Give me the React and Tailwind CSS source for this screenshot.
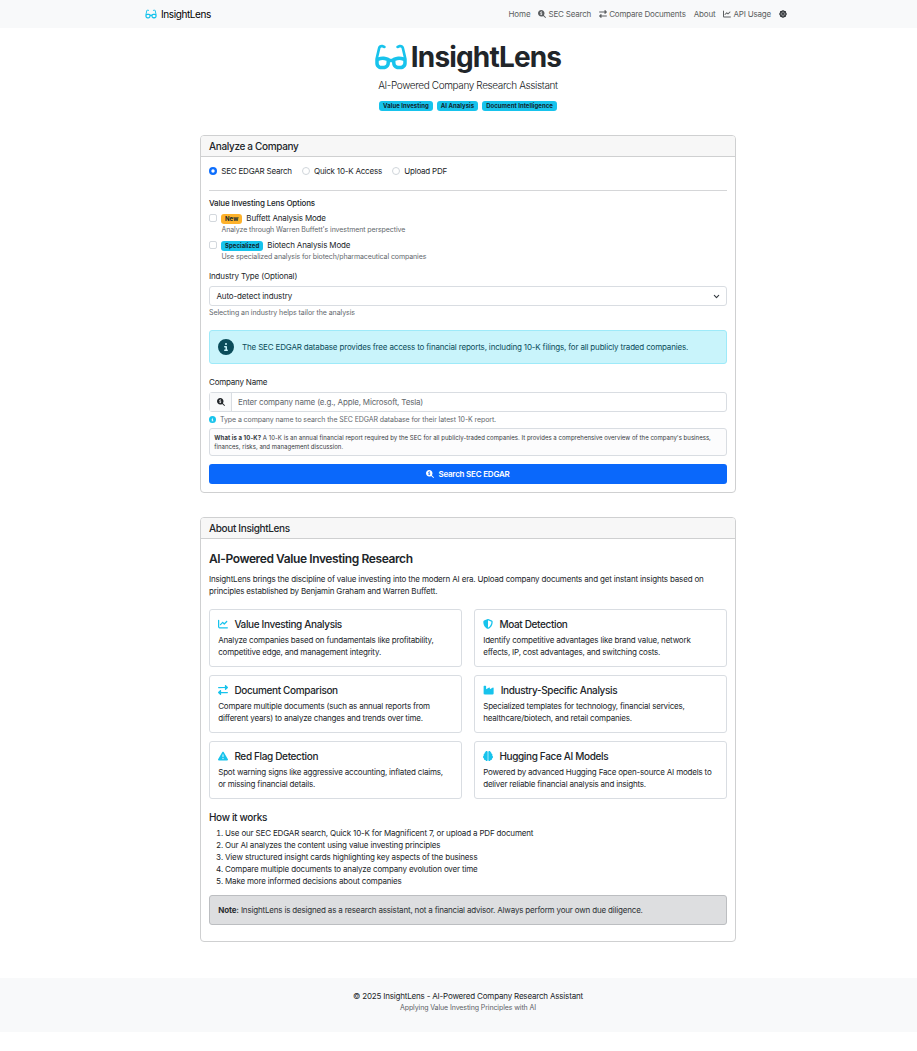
import React from "react";
import {
  FaGlasses, FaMagnifyingGlassDollar, FaRightLeft, FaChartLine, FaCircleInfo,
  FaShieldHalved, FaIndustry, FaTriangleExclamation, FaBrain, FaDharmachakra,
} from "react-icons/fa6";

const cards = [
  { icon: <FaChartLine />, title: "Value Investing Analysis", lines: ["Analyze companies based on fundamentals like profitability,", "competitive edge, and management integrity."] },
  { icon: <FaShieldHalved />, title: "Moat Detection", lines: ["Identify competitive advantages like brand value, network", "effects, IP, cost advantages, and switching costs."] },
  { icon: <FaRightLeft />, title: "Document Comparison", lines: ["Compare multiple documents (such as annual reports from", "different years) to analyze changes and trends over time."] },
  { icon: <FaIndustry className="w-[11.25px]" />, title: "Industry-Specific Analysis", lines: ["Specialized templates for technology, financial services,", "healthcare/biotech, and retail companies."] },
  { icon: <FaTriangleExclamation />, title: "Red Flag Detection", lines: ["Spot warning signs like aggressive accounting, inflated claims,", "or missing financial details."] },
  { icon: <FaBrain />, title: "Hugging Face AI Models", lines: ["Powered by advanced Hugging Face open-source AI models to", "deliver reliable financial analysis and insights."] },
];

const steps = [
  "Use our SEC EDGAR search, Quick 10-K for Magnificent 7, or upload a PDF document",
  "Our AI analyzes the content using value investing principles",
  "View structured insight cards highlighting key aspects of the business",
  "Compare multiple documents to analyze company evolution over time",
  "Make more informed decisions about companies",
];

function Badge({ children, className = "bg-[#17c3ec]" }) {
  return (
    <span className={"inline-flex h-[10px] items-center rounded-[3px] px-[4px] text-[6px] font-bold leading-none tracking-[0.04px] text-[#10262e] " + className}>
      {children}
    </span>
  );
}

function Panel({ title, className, children }) {
  return (
    <section className={"w-[536px] rounded-[4px] border border-[#cfd0d1] bg-white " + className}>
      <h2 className="flex h-[21px] items-center rounded-t-[3px] border-b border-[#cfd0d1] bg-[#f7f7f7] px-[8px] text-[10px] font-medium tracking-[-0.34px]">
        {title}
      </h2>
      <div className="px-[8px]">{children}</div>
    </section>
  );
}

function Radio({ label, checked }) {
  return (
    <label className="flex items-center gap-[4.3px]">
      <svg viewBox="0 0 8 8" className="size-[8px] shrink-0">
        {checked ? (
          <>
            <circle cx="4" cy="4" r="4" fill="#0d6efd" />
            <circle cx="4" cy="4" r="1.7" fill="#fff" />
          </>
        ) : (
          <circle cx="4" cy="4" r="3.5" fill="#fff" stroke="#d0d5da" strokeWidth="1" />
        )}
      </svg>
      <span className="tracking-[-0.21px]">{label}</span>
    </label>
  );
}

function Option({ badge, label, help }) {
  return (
    <div className="flex gap-[4px]">
      <span className="mt-[2px] size-[8px] shrink-0 rounded-[2px] border border-[#d3d8dd]" />
      <div>
        <div className="flex h-[12px] items-end gap-[4px]">{badge}<span className="tracking-[-0.15px]">{label}</span></div>
        <div className="h-[11px] pl-[0.4px] text-[7px] leading-[11px] tracking-[-0.09px] text-[#62676c]">{help}</div>
      </div>
    </div>
  );
}

export default function App() {
  return (
    <div className="h-[1051px] w-full overflow-hidden bg-white font-['Inter',sans-serif] text-[8px] leading-[12px] tracking-[-0.167px] text-[#212529]">
      <div className="flex w-[936px] flex-col items-center">
        <nav className="flex h-[28px] w-full items-center justify-between bg-[#f8f9fa] pl-[145px] pr-[149px]">
          <div className="flex items-center gap-[4px] text-[10px] tracking-[-0.4px] text-black">
            <FaGlasses className="h-[10px] w-[12px] text-[#17c3ec]" />
            <span>InsightLens</span>
          </div>
          <div className="flex items-center gap-[8px] text-[#5b5e60]">
            <span className="tracking-[-0.1px]">Home</span>
            <span className="flex items-center gap-[2px] tracking-[-0.19px]"><FaMagnifyingGlassDollar />SEC Search</span>
            <span className="flex items-center gap-[2px] tracking-[-0.2px]"><FaRightLeft />Compare Documents</span>
            <span>About</span>
            <span className="flex items-center gap-[2px] tracking-[-0.19px]"><FaChartLine />API Usage</span>
            <FaDharmachakra className="text-[#1f2327]" />
          </div>
        </nav>

        <header className="flex flex-col items-center">
          <h1 className="mt-[12px] flex h-[34px] items-center gap-[4px] text-[28px] font-bold leading-none tracking-[-0.85px]">
            <FaGlasses className="h-[28px] w-[32px] text-[#17c3ec]" />
            <span>InsightLens</span>
          </h1>
          <p className="mt-[4px] h-[15px] text-[10px] font-light leading-[15px] tracking-[-0.38px] text-[#14171a]">AI-Powered Company Research Assistant</p>
          <div className="mt-[8px] flex gap-[4px]">
            <Badge>Value Investing</Badge>
            <Badge>AI Analysis</Badge>
            <Badge>Document Intelligence</Badge>
          </div>
        </header>

        <Panel title="Analyze a Company" className="mt-[24px] h-[358px]">
          <div className="mt-[8px] flex h-[12px] items-center gap-[10px]">
            <Radio label="SEC EDGAR Search" checked />
            <Radio label="Quick 10-K Access" />
            <Radio label="Upload PDF" />
          </div>
          <hr className="mt-[13px] border-[#d5d6d8]" />
          <div className="mt-[6px] font-medium">Value Investing Lens Options</div>
          <div className="mt-[3px] flex flex-col gap-[4px]">
            <Option badge={<Badge className="bg-[#fdb22b]">New</Badge>} label="Buffett Analysis Mode" help="Analyze through Warren Buffett's investment perspective" />
            <Option badge={<Badge>Specialized</Badge>} label="Biotech Analysis Mode" help="Use specialized analysis for biotech/pharmaceutical companies" />
          </div>
          <div className="mt-[8px] tracking-[-0.14px]">Industry Type (Optional)</div>
          <div className="mt-[4px] flex h-[20px] items-center justify-between rounded-[3px] border border-[#d9dde2] px-[6.4px]">
            <span className="tracking-[-0.13px]">Auto-detect industry</span>
            <svg viewBox="0 0 16 16" className="size-[7px]" fill="none" stroke="#343a40" strokeWidth="2.6" strokeLinecap="round" strokeLinejoin="round"><path d="m3 5.5 5 5 5-5" /></svg>
          </div>
          <div className="mt-[1px] h-[11px] text-[7px] leading-[11px] tracking-[-0.07px] text-[#62676c]">Selecting an industry helps tailor the analysis</div>
          <div className="mt-[12px] flex h-[34px] items-center gap-[8px] rounded-[3px] border border-[#9eeaf9] bg-[#c9f4fb] px-[8px] text-[#0b4c5a]">
            <FaCircleInfo className="size-[16px]" />
            <span>The SEC EDGAR database provides free access to financial reports, including 10-K filings, for all publicly traded companies.</span>
          </div>
          <div className="mt-[12px] tracking-[-0.2px]">Company Name</div>
          <div className="mt-[4px] flex h-[20px] items-stretch rounded-[3px] border border-[#d9dde2]">
            <span className="flex w-[22px] items-center justify-center border-r border-[#d9dde2] bg-[#f8f9fa]"><FaMagnifyingGlassDollar /></span>
            <span className="flex items-center pl-[6px] text-[#62676c]">Enter company name (e.g., Apple, Microsoft, Tesla)</span>
          </div>
          <div className="mt-[2px] flex h-[11px] items-center gap-[4px] text-[7px] leading-[11px] tracking-[-0.09px] text-[#62676c]">
            <FaCircleInfo className="text-[#17c3ec]" />
            <span>Type a company name to search the SEC EDGAR database for their latest 10-K report.</span>
          </div>
          <div className="mt-[3px] h-[28px] whitespace-nowrap rounded-[3px] border border-[#d9dde2] bg-[#fcfcfd] px-[4.3px] pt-[4px] text-[6px] leading-[9px] tracking-[0.035px] text-[#33383c]">
            <b className="tracking-[0.09px]">What is a 10-K?</b> A 10-K is an annual financial report required by the SEC for all publicly-traded companies. It provides a comprehensive overview of the company's business,
            <br />finances, risks, and management discussion.
          </div>
          <button className="mt-[8px] flex h-[20px] w-full items-center justify-center gap-[4px] rounded-[3px] bg-[#0a68fb] font-semibold tracking-[-0.21px] text-white">
            <FaMagnifyingGlassDollar />Search SEC EDGAR
          </button>
        </Panel>

        <Panel title="About InsightLens" className="mt-[24px] h-[425px]">
          <h3 className="mt-[12px] h-[16px] text-[12px] font-semibold leading-[16px] tracking-[-0.4px]">AI-Powered Value Investing Research</h3>
          <p className="mt-[6px] whitespace-nowrap">
            InsightLens brings the discipline of value investing into the modern AI era. Upload company documents and get instant insights based on
            <br />principles established by Benjamin Graham and Warren Buffett.
          </p>
          <div className="mt-[12px] grid grid-cols-2 gap-x-[12px] gap-y-[8px]">
            {cards.map((c) => (
              <article key={c.title} className="h-[58px] whitespace-nowrap rounded-[3px] border border-[#d9dde2] pl-[8.2px] pt-[8px]">
                <h4 className="flex h-[12px] items-center gap-[6.2px] text-[10px] font-medium leading-[12px] tracking-[-0.35px]">
                  <span className="text-[#17c3ec]">{c.icon}</span>{c.title}
                </h4>
                <p className="mt-[4px] tracking-[-0.19px]">{c.lines[0]}<br />{c.lines[1]}</p>
              </article>
            ))}
          </div>
          <h4 className="mt-[12px] h-[13px] text-[10px] font-medium leading-[13px] tracking-[-0.34px]">How it works</h4>
          <ol className="mt-[3px] list-decimal pl-[16px]">
            {steps.map((s) => <li key={s}>{s}</li>)}
          </ol>
          <div className="mt-[8px] flex h-[30px] items-center gap-[2px] rounded-[3px] border border-[#bcbec1] bg-[#dddee0] px-[8.2px] text-[#2b2f32]">
            <b className="tracking-[-0.12px]">Note:</b><span className="tracking-[-0.18px]">InsightLens is designed as a research assistant, not a financial advisor. Always perform your own due diligence.</span>
          </div>
        </Panel>

        <footer className="mt-[36px] h-[54px] w-full bg-[#f8f9fa] pt-[12px] text-center">
          <div className="tracking-[-0.185px]">© 2025 InsightLens - AI-Powered Company Research Assistant</div>
          <div className="text-[7px] leading-[11px] tracking-[-0.1px] text-[#5c6165]">Applying Value Investing Principles with AI</div>
        </footer>
      </div>
    </div>
  );
}
